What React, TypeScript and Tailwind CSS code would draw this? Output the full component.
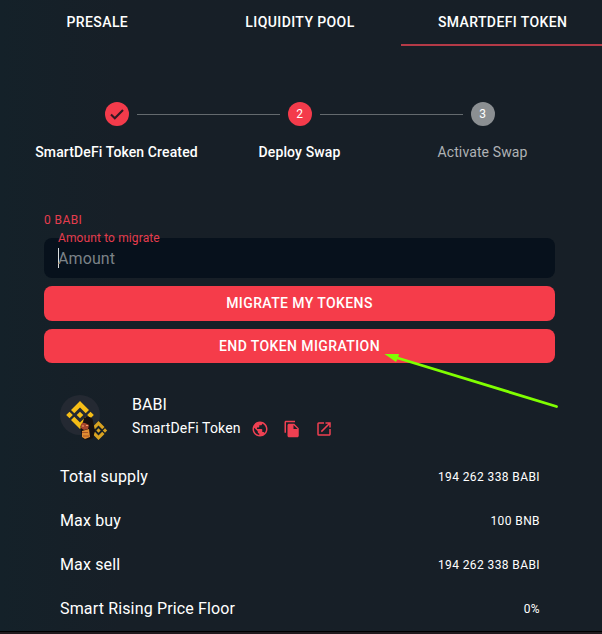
import type { ReactNode } from 'react';
import { MdPublic, MdFileCopy, MdOpenInNew } from 'react-icons/md';

const tabs = ['PRESALE', 'LIQUIDITY POOL', 'SMARTDEFI TOKEN'];

const stats = [
  { label: 'Total supply', value: '194 262 338 BABI' },
  { label: 'Max buy', value: '100 BNB' },
  { label: 'Max sell', value: '194 262 338 BABI' },
  { label: 'Smart Rising Price Floor', value: '0%' },
];

function Tabs() {
  return (
    <nav className="-ml-1 grid h-[46px] w-[608px] shrink-0 grid-cols-3 text-sm font-medium tracking-[0.4px]">
      {tabs.map((tab, i) => (
        <div
          key={tab}
          className={`flex items-center justify-center border-b-2 ${i === 2 ? 'border-[#b43a47]' : 'border-transparent'}`}
        >
          {tab}
        </div>
      ))}
    </nav>
  );
}

function CheckMark() {
  return (
    <svg viewBox="0 0 24 24" className="size-6" fill="none">
      <path d="M6 12.5 9.8 16.2 18 8" stroke="#321923" strokeWidth="2.1" />
    </svg>
  );
}

function Step({ mark, label, active }: { mark: ReactNode; label: string; active: boolean }) {
  return (
    <div className="flex flex-col items-center">
      <div
        className={`flex size-6 items-center justify-center rounded-full text-xs ${active ? 'bg-[#f43b4b]' : 'bg-[#8b8f92]'}`}
      >
        {mark}
      </div>
      <div
        className={`mt-4 whitespace-nowrap text-sm leading-5 tracking-[0.12px] ${active ? 'font-medium' : 'text-[#afb2b5]'}`}
      >
        {label}
      </div>
    </div>
  );
}

function Stepper() {
  return (
    <div className="relative ml-[25px] mt-14 grid h-[60px] w-[549px] shrink-0 grid-cols-3">
      <div className="absolute left-28 top-3 h-px w-[143px] bg-[#646a6e]" />
      <div className="absolute left-[295px] top-3 h-px w-[143px] bg-[#646a6e]" />
      <Step mark={<CheckMark />} label="SmartDeFi Token Created" active />
      <Step mark="2" label="Deploy Swap" active />
      <Step mark="3" label="Activate Swap" active={false} />
    </div>
  );
}

function TokenLogo() {
  return (
    <svg viewBox="0 0 50 50" className="size-[50px]">
      <circle cx="20" cy="20" r="20" fill="#242932" />
      <g fill="#f6bd16">
        <path d="M20 6 29 15 25.7 18.3 20 12.6 14.3 18.3 11 15Z" />
        <path d="M20 34 29 25 25.7 21.7 20 27.4 14.3 21.7 11 25Z" />
        <path d="M20 16.7 23.3 20 20 23.3 16.7 20Z" />
        <path d="M9.5 16.7 12.8 20 9.5 23.3 6.2 20Z" />
        <path d="M30.5 16.7 33.8 20 30.5 23.3 27.2 20Z" />
      </g>
      <g fill="#d9a321">
        <path d="M38.5 26 44.5 32 42.2 34.2 38.5 30.5 34.8 34.2 32.5 32Z" />
        <path d="M38.5 45 44.5 39 42.2 36.8 38.5 40.5 34.8 36.8 32.5 39Z" />
        <path d="M38.5 33.3 40.7 35.5 38.5 37.7 36.3 35.5Z" />
        <path d="M45 33.3 47.2 35.5 45 37.7 42.8 35.5Z" />
      </g>
      <path d="M20.5 31 23 27 24 23Q29 20 32.5 24L34 31 35 36 33 43Q28 46 23 44L21 38Z" fill="#17100f" />
      <path d="M21 29.5Q22 27 25 28L29 30 28 34 24 35 21 33Z" fill="#a8452c" />
      <path d="M22 36 29 34 30 42 25 44 22 42Z" fill="#e08c32" />
      <path d="M22 37.5H28M23 41H29" stroke="#a95424" strokeWidth="1" />
      <path d="M22 31H24M26 30.5H28" stroke="#efa06a" strokeWidth="1.2" />
    </svg>
  );
}

export default function App() {
  return (
    <main className="relative flex h-[634px] w-[602px] flex-col overflow-hidden bg-linear-to-r from-[#142129] via-[#171f27] via-20% to-[#171f27] font-[Roboto,sans-serif] text-white">
      <Tabs />
      <Stepper />

      <section className="ml-11 mt-[50px] flex w-[511px] shrink-0 flex-col">
        <div className="text-xs leading-4 tracking-[0.4px] text-[#e53d4e]">0 BABI</div>
        <div className="mt-[10px] flex h-10 flex-col rounded-lg bg-[#07111c] pl-3.5">
          <label className="-mt-2 text-xs leading-4 tracking-[0.12px] text-[#e53d4e]">Amount to migrate</label>
          <div className="mt-[3px] flex h-5 items-center text-[#7b8287]">
            <span className="-mt-0.5 h-5 w-px bg-[#d9dddf]" />
            <span className="-ml-px text-base leading-5 tracking-[0.1px]">Amount</span>
          </div>
        </div>
        <button className="mt-2 h-[35px] rounded-lg bg-[#f53c4a] pb-0.5 text-sm font-medium tracking-[0.4px]">
          MIGRATE MY TOKENS
        </button>
        <button className="mt-2 h-[34px] rounded-lg bg-[#f53c4a] pb-px text-sm font-medium tracking-[0.4px]">
          END TOKEN MIGRATION
        </button>
      </section>

      <section className="ml-[60px] mt-8 flex h-[49px] shrink-0">
        <TokenLogo />
        <div className="ml-[22px] flex flex-col">
          <div className="text-base leading-5">BABI</div>
          <div className="mt-px flex h-6 items-center text-sm tracking-[0.13px]">
            <span>SmartDeFi Token</span>
            <div className="ml-[10px] flex gap-[14px] pt-0.5 text-[#ef4052]">
              <MdPublic className="size-[18px]" />
              <MdFileCopy className="size-[18px]" />
              <MdOpenInNew className="size-[18px]" />
            </div>
          </div>
        </div>
      </section>

      <dl className="ml-[60px] mt-[11px] w-[480px]">
        {stats.map(({ label, value }) => (
          <div key={label} className="flex h-11 items-center justify-between">
            <dt className="text-base tracking-[0.15px]">{label}</dt>
            <dd className="text-xs tracking-[0.4px]">{value}</dd>
          </div>
        ))}
      </dl>

      <div className="absolute inset-x-0 bottom-0 h-[3px] border-t border-black bg-[#211b1f]" />
      <svg viewBox="0 0 602 634" className="pointer-events-none absolute inset-0 h-[634px] w-[602px]">
        <path d="M396 357.5 556.5 406.5" stroke="#80ff00" strokeWidth="2.8" strokeLinecap="round" />
        <path d="M384.5 354 399 354 398 358 396 362Z" fill="#80ff00" />
      </svg>
    </main>
  );
}
